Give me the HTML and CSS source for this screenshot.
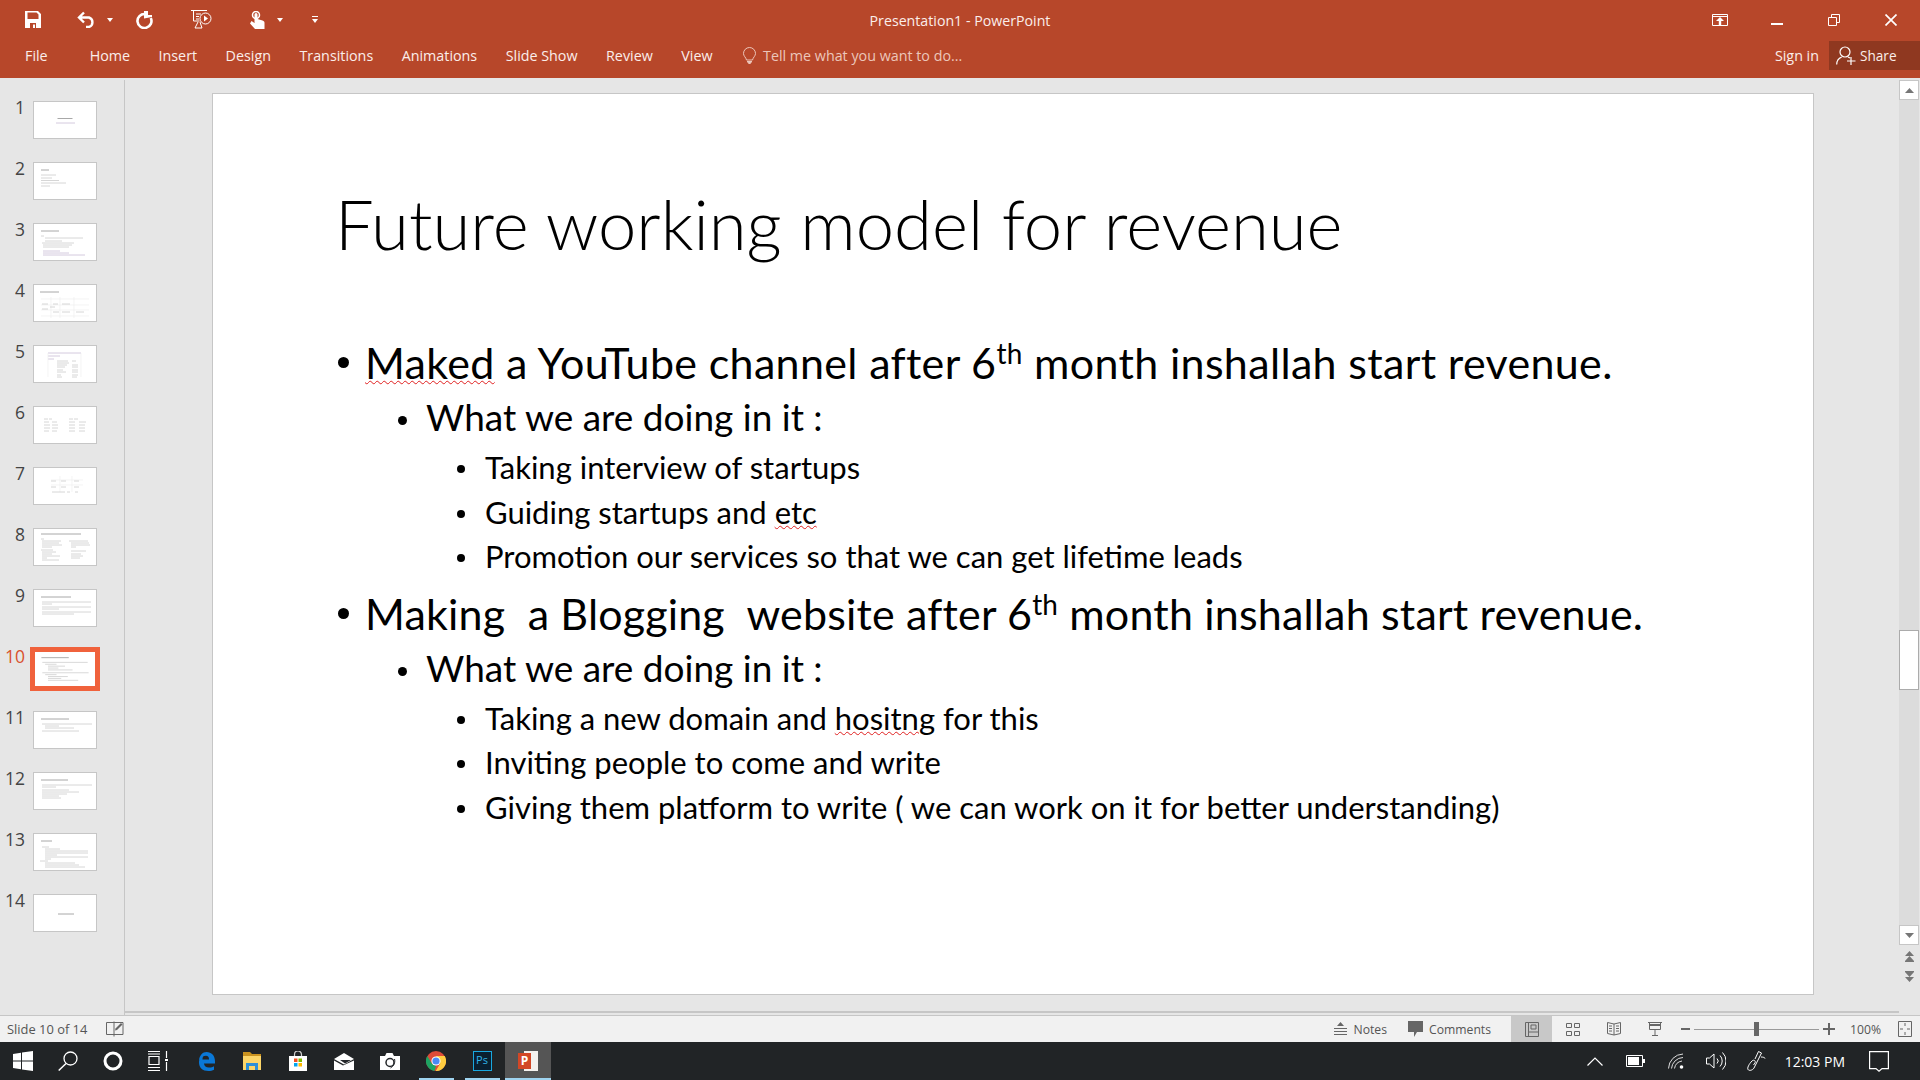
FILE: index.html
```html
<!DOCTYPE html>
<html lang="en">

<head>
    <meta charset="UTF-8" />
    <meta name="viewport" content="width=device-width, initial-scale=1.0" />
    <title>Presentation1 - PowerPoint</title>
    <link rel="stylesheet" href="styles.css">
</head>

<body>
    <header class="ribbon">
        <div class="titlebar">
            <div class="qat">
                <svg class="qat-save" width="16" height="17" viewBox="0 0 16 17"><path fill="#fff" fill-rule="evenodd" d="M0 0h13l3 3v14H0zM2.500 1.500v6.500h11V3.500l-2-2zM5 12v5h6v-5zM8 13.500h2V17H8z"/></svg>
                <svg class="qat-undo" width="19" height="17" viewBox="0 0 19 17"><path fill="none" stroke="#fff" stroke-width="2.400" d="M7 1.500 2 6.500l5 5M2.500 6.500H12a5 5 0 0 1 0 9.500H9"/></svg>
                <span class="caret qat-caret-a"></span>
                <svg class="qat-redo" width="18" height="18" viewBox="0 0 18 18"><path fill="none" stroke="#fff" stroke-width="2.600" d="M10 3A7 7 0 1 0 15.800 7"/><path fill="#fff" d="M9 0v7.500l8-1.500V4h-4V0z"/></svg>
                <svg class="qat-show" width="21" height="19" viewBox="0 0 21 19"><path fill="none" stroke="#fff" d="M0 .5h16M2.500 1v10h6M5 4h5M5 6.500h3M5 9h3M7 12l-3 6h7l-2-6"/><circle cx="14.500" cy="8.500" r="5.500" fill="none" stroke="#fff"/><path fill="#fff" d="M13 5.500l4 3-4 3z"/></svg>
                <svg class="qat-touch" width="15" height="18" viewBox="0 0 15 18"><circle cx="6" cy="4" r="3.500" fill="none" stroke="#fff" stroke-width="1.500"/><path fill="#fff" d="M4.500 3.500a1.500 1.500 0 0 1 3 0V8l5 1.500c1.500.5 2 1 2 2.500v6H5l-5-5.500L1.500 10l3 2z"/></svg>
                <span class="caret qat-caret-b"></span>
                <svg class="qat-more" width="6" height="8" viewBox="0 0 6 8"><path fill="#fff" d="M0 0h6v1H0zM0 3h6L3 7z"/></svg>
            </div>
            <div class="doc-title">Presentation1 - PowerPoint</div>
            <div class="window-controls">
                <svg width="16" height="12" viewBox="0 0 16 12"><path fill="none" stroke="#fff" d="M.5.500h15v11H.5zM.5 2.500h15"/><path fill="#fff" d="M8 3l4 4H9.200v4H6.800V7H4z"/></svg>
                <svg class="ctl-min" width="12" height="2" viewBox="0 0 12 2"><path fill="#fff" d="M0 0h12v2H0z"/></svg>
                <svg class="ctl-restore" width="12" height="12" viewBox="0 0 12 12"><path fill="none" stroke="#fff" d="M.5 3.500h8v8h-8zM3.500 3V.5h8v8H9"/></svg>
                <svg class="ctl-close" width="12" height="12" viewBox="0 0 12 12"><path fill="none" stroke="#fff" stroke-width="1.700" d="M.5.500l11 11M11.500.5l-11 11"/></svg>
            </div>
        </div>
        <div class="tabs">
            <span class="tab tab-file">File</span>
            <span class="tab">Home</span>
            <span class="tab">Insert</span>
            <span class="tab">Design</span>
            <span class="tab">Transitions</span>
            <span class="tab">Animations</span>
            <span class="tab">Slide Show</span>
            <span class="tab">Review</span>
            <span class="tab">View</span>
            <span class="tell-me">
                <svg width="13" height="17" viewBox="0 0 13 17"><path fill="none" stroke="#ecc6ba" d="M6.500.5a6 6 0 0 0-6 6c0 2.500 2.500 4 3 6.500h6c.5-2.500 3-4 3-6.500a6 6 0 0 0-6-6z"/><path fill="#ecc6ba" d="M4 14h5v1.500H8L7.500 17h-2L5 15.500H4z"/></svg>
                Tell me what you want to do...
            </span>
            <span class="sign-in">Sign in</span>
            <span class="share">
                <svg width="20" height="19" viewBox="0 0 20 19"><circle cx="9" cy="6" r="5" fill="none" stroke="#fff" stroke-width="1.200"/><path fill="none" stroke="#fff" stroke-width="1.200" d="M.7 18.500c0-4 2.500-6.500 5-7.500M12 11l2 1M15 11v8M11 15h8.500"/></svg>
                Share
            </span>
        </div>
    </header>

    <main class="workspace">
        <aside class="slide-panel">
            <div class="thumb-row"><span class="thumb-num">1</span><div class="thumb"><svg viewBox="0 0 62 36"><path class="head" d="M23.500 16.500h15"/><path class="tint" d="M22 21h19"/></svg></div></div>
            <div class="thumb-row"><span class="thumb-num">2</span><div class="thumb"><svg viewBox="0 0 62 36"><path class="head" d="M7 7h8"/><path d="M7 12h15M7 15h11M7 17.500h18M7 20h25M7 23h9"/></svg></div></div>
            <div class="thumb-row"><span class="thumb-num">3</span><div class="thumb"><svg viewBox="0 0 62 36"><path class="head" d="M7 7h18"/><path d="M7 12h3M11 14h38M11 17h17M8 19h32M9 21h29M9 23h26"/><path class="tint" d="M9 27h17M9 29h26M9 31h42"/></svg></div></div>
            <div class="thumb-row"><span class="thumb-num">4</span><div class="thumb"><svg viewBox="0 0 62 36"><path class="head" d="M6 7h19"/><path class="faint" d="M7 14h48M7 20h48M7 25h48M7 31h48M17 12v21M26 12v21M40 12v21"/><path d="M8 19h6M19 19h5M28 19h8M8 24h6M19 27h6M28 27h8M42 27h8M16 22h5"/></svg></div></div>
            <div class="thumb-row"><span class="thumb-num">5</span><div class="thumb"><svg viewBox="0 0 62 36"><path class="tint" d="M14 7h33M14 10h12M14 13h6"/><path class="faint" d="M14 7v24M47 7v24"/><path d="M23 15h11M38 15h4M23 17h12M23 19h10M38 19h6M23 21h8M38 21h6M23 24h6M38 24h6M23 26h9M38 26h6M23 29h4M38 29h6M23 31h5M38 31h5"/></svg></div></div>
            <div class="thumb-row"><span class="thumb-num">6</span><div class="thumb"><svg viewBox="0 0 62 36"><path d="M10 12h4M15 12h3M35 12h4M40 12h4M10 15h5M18 15h5M35 15h6M45 15h7M10 18h6M18 18h6M35 18h6M45 18h6M10 21h6M18 21h6M35 21h6M45 21h6M10 24h5M18 24h5M35 24h6M45 24h6"/></svg></div></div>
            <div class="thumb-row"><span class="thumb-num">7</span><div class="thumb"><svg viewBox="0 0 62 36"><path class="faint" d="M17 12h32M17 17h32M26 8v16M38 8v16"/><path d="M17 13h5M27 13h5M40 13h5M17 19h5M27 19h5M40 19h5M18 24h13M33 24h3M41 24h3"/></svg></div></div>
            <div class="thumb-row"><span class="thumb-num">8</span><div class="thumb"><svg viewBox="0 0 62 36"><path class="head" d="M7 5h40"/><path d="M7 10h3M8 12h19M8 14h17M8 16h20M8 18h10M7 21h12M8 23h14M8 25h10M8 27h18M8 29h5M8 31h17M35 12h19M37 14h18M37 16h19M37 18h5M37 22h15M37 25h10M37 27h12M37 29h9"/></svg></div></div>
            <div class="thumb-row"><span class="thumb-num">9</span><div class="thumb"><svg viewBox="0 0 62 36"><path class="head" d="M7 7h30"/><path d="M8 12h49M8 14h10M8 17h49M8 19h17M8 22h49M8 24h32"/></svg></div></div>
            <div class="thumb-row"><span class="thumb-num thumb-num-active">10</span><div class="thumb thumb-active"><svg viewBox="0 0 62 36"><path class="head" d="M6 6h29"/><path d="M7 11h48M10 13h12M13 15h18M13 17h11M13 19h26M7 22h49M10 24h12M13 26h21M13 28h14M13 30h32"/></svg></div></div>
            <div class="thumb-row"><span class="thumb-num">11</span><div class="thumb"><svg viewBox="0 0 62 36"><path class="head" d="M7 7h28"/><path d="M8 12h50M11 14h14M11 16h29M8 19h37"/></svg></div></div>
            <div class="thumb-row"><span class="thumb-num">12</span><div class="thumb"><svg viewBox="0 0 62 36"><path class="head" d="M7 7h27"/><path d="M8 12h50M8 14h14M8 17h27M8 19h37M8 21h25M8 23h17M8 25h19"/></svg></div></div>
            <div class="thumb-row"><span class="thumb-num">13</span><div class="thumb"><svg viewBox="0 0 62 36"><path class="head" d="M7 7h11"/><path d="M8 13h7M11 15h15M11 17h43M11 19h43M11 21h12M11 23h43M11 25h6M6 27h8M11 29h30M11 31h34M11 33h40"/></svg></div></div>
            <div class="thumb-row"><span class="thumb-num">14</span><div class="thumb"><svg viewBox="0 0 62 36"><path class="head" d="M24 19h16"/></svg></div></div>
        </aside>

        <section class="editor">
            <article class="slide">
                <h1 class="slide-title">Future working model for revenue</h1>
                <ul class="level-1">
                    <li><span class="typo">Maked</span> a YouTube channel after 6<sup>th</sup> month inshallah start revenue.</li>
                </ul>
                <ul class="level-2">
                    <li>What we are doing in it :</li>
                </ul>
                <ul class="level-3">
                    <li>Taking interview of startups</li>
                    <li>Guiding startups and <span class="typo">etc</span></li>
                    <li>Promotion our services so that we can get lifetime leads</li>
                </ul>
                <ul class="level-1 block-gap">
                    <li>Making&nbsp; a Blogging&nbsp; website after 6<sup>th</sup> month inshallah start revenue.</li>
                </ul>
                <ul class="level-2">
                    <li>What we are doing in it :</li>
                </ul>
                <ul class="level-3">
                    <li>Taking a new domain and <span class="typo">hositng</span> for this</li>
                    <li>Inviting people to come and write</li>
                    <li>Giving them platform to write ( we can work on it for better understanding)</li>
                </ul>
            </article>
        </section>

        <aside class="scrollbar">
            <div class="scroll-btn"><svg width="9" height="5" viewBox="0 0 9 5"><path fill="#767676" d="M4.500 0 9 5H0z"/></svg></div>
            <div class="scroll-track"><div class="scroll-thumb"></div></div>
            <div class="scroll-btn"><svg width="9" height="5" viewBox="0 0 9 5"><path fill="#767676" d="M0 0h9L4.500 5z"/></svg></div>
            <svg class="scroll-page" width="9" height="11" viewBox="0 0 9 11"><path fill="#767676" d="M4.500 0 9 5H0zM4.500 5 9 10v1H0v-1z"/></svg>
            <svg class="scroll-page" width="9" height="11" viewBox="0 0 9 11"><path fill="#767676" d="M0 0h9v1L4.500 6 0 1zM0 6h9L4.500 11z"/></svg>
        </aside>
    </main>

    <footer class="statusbar">
        <span class="slide-count">Slide 10 of 14</span>
        <svg class="notes-edit" width="18" height="16" viewBox="0 0 18 16"><path fill="none" stroke="#666" d="M8 1.500H.5v12H8M8 .5v15M8 1.500h9v12H8"/><path fill="#666" d="M15 2l1.500 1.500L11 9l-2 .5.500-2z"/></svg>
        <div class="status-right">
            <span class="status-item">
                <svg width="13" height="15" viewBox="0 0 13 15"><path fill="#666" d="M6.500 0 10 4H3zM0 6h13v1H0zM0 9h13v1H0zM0 12h13v1H0z"/></svg>
                Notes
            </span>
            <span class="status-item status-comments">
                <svg width="15" height="16" viewBox="0 0 15 16"><path fill="#666" d="M0 0h15v11H9l-3 5v-5H0z"/></svg>
                Comments
            </span>
            <span class="view-btn view-btn-on"><svg width="14" height="15" viewBox="0 0 14 15"><path fill="none" stroke="#666" d="M.5.500h13v14H.5zM3.500.5v14M6 3h5v4H6zM4 10h9"/></svg></span>
            <span class="view-btn"><svg width="14" height="13" viewBox="0 0 14 13"><path fill="none" stroke="#666" d="M.5.500h5v4h-5zM8.500.5h5v4h-5zM.5 8.500h5v4h-5zM8.500 8.500h5v4h-5z"/></svg></span>
            <span class="view-btn"><svg width="14" height="14" viewBox="0 0 14 14"><path fill="none" stroke="#666" d="M.5.500 7 2l6.500-1.500v11L7 13 .5 11.500zM7 2v11M2 4h3M2 6.500h3M2 9h3M9 4h3M9 6.500h3M9 9h3"/></svg></span>
            <span class="view-btn"><svg width="14" height="14" viewBox="0 0 14 14"><path fill="none" stroke="#666" d="M0 .5h14M1.500 1v6.500h11V1M7 8v5M4 13.500h6"/><path fill="#666" d="M2 2h10v2H2z"/></svg></span>
            <span class="zoom-minus"></span>
            <div class="zoom-slider"></div>
            <span class="zoom-plus"></span>
            <span class="zoom-level">100%</span>
            <svg class="zoom-fit" width="14" height="16" viewBox="0 0 14 16"><path fill="none" stroke="#666" d="M.5.500h13v15H.5zM7 2v3M7 11v3M2 8h3M9 8h3"/></svg>
        </div>
    </footer>

    <nav class="taskbar">
        <span class="task-btn task-sys"><svg width="20" height="20" viewBox="0 0 20 20"><path fill="#fff" d="M0 3l8-1.200v7.700H0zM9 1.600 20 0v9.500H9zM0 10.500h8v7.700L0 17zM9 10.500h11V20L9 18.400z"/></svg></span>
        <span class="task-btn task-sys"><svg width="20" height="20" viewBox="0 0 20 20"><circle cx="12.500" cy="7.500" r="6.500" fill="none" stroke="#fff" stroke-width="1.300"/><path stroke="#fff" stroke-width="1.500" d="M8 12.500.7 19.500"/></svg></span>
        <span class="task-btn task-sys"><svg width="20" height="20" viewBox="0 0 20 20"><circle cx="10" cy="10" r="8" fill="none" stroke="#fff" stroke-width="3"/></svg></span>
        <span class="task-btn task-sys"><svg width="20" height="20" viewBox="0 0 20 20"><path fill="none" stroke="#fff" stroke-width="1.200" d="M0 .5h12M0 19.500h12M1 5.500h10v8H1zM0 16.500h12M0 3h12M18.500 0v7M18.500 11v9"/><path fill="#fff" d="M17 8h3v2h-3z"/></svg></span>
        <span class="task-btn task-first"><svg width="17" height="19" viewBox="0 0 17 19"><path fill="#0a78d7" d="M8.500 0C13.500 0 17 3.500 17 9.500v2H6c.2 2.500 2 4 5 4 2 0 4-.6 5-1.300v3.500c-1.500.9-3.500 1.300-5.500 1.300C4.500 19 1 15.500 1 10.500 1 6.500 3.500 3 7 2.500 5 4 4.500 5.500 4.500 7.500H11c0-2.500-1-3.700-3-3.700-2.500 0-5 1.700-7 4.200C1.700 3.500 4.500 0 8.500 0z"/></svg></span>
        <span class="task-btn"><svg width="18" height="18" viewBox="0 0 18 18"><path fill="#c9921f" d="M0 0h7l2 2h9v3H0z"/><path fill="#fbd568" d="M0 4h18v14H0z"/><path fill="#2c8fd6" d="M3 11h12v7h-3v-4H6v4H3z"/></svg></span>
        <span class="task-btn"><svg width="18" height="20" viewBox="0 0 18 20"><path fill="none" stroke="#cfcfcf" stroke-width="1.200" d="M5.500 5V3.500a3.500 3.500 0 0 1 7 0V5"/><path fill="#fff" d="M0 5h18v15H0z"/><path fill="#f25022" d="M5 7.500h3.500V11H5z"/><path fill="#7fba00" d="M9.500 7.500H13V11H9.500z"/><path fill="#00a4ef" d="M5 12h3.500v3.500H5z"/><path fill="#ffb900" d="M9.500 12H13v3.500H9.500z"/></svg></span>
        <span class="task-btn"><svg width="20" height="17" viewBox="0 0 20 17"><path fill="#fff" d="M0 6 10 0l10 6-10 5.500zM0 7.500 9 12.500l11-5V17H0z"/><path fill="#232629" d="M6 7h11l-6 3.500z"/></svg></span>
        <span class="task-btn"><svg width="20" height="17" viewBox="0 0 20 17"><path fill="#fff" d="M0 3h5l1.500-3h6L14 3h6v14H0z"/><circle cx="10" cy="9.500" r="4" fill="none" stroke="#232629" stroke-width="1.500"/><path fill="none" stroke="#232629" d="M14.500 6c1 3-.5 7-4 9"/></svg></span>
        <span class="task-btn task-open"><svg width="20" height="20" viewBox="0 0 20 20"><circle cx="10" cy="10" r="10" fill="#dd4b39"/><path fill="#1da462" d="M10 20A10 10 0 0 1 1.300 5l4.500 7.500L10 15l-1.500 4.900z"/><path fill="#ffcd40" d="M10 5h8.700a10 10 0 0 1-9 15l4.500-7.500z"/><circle cx="10" cy="10" r="4.600" fill="#fff"/><circle cx="10" cy="10" r="3.600" fill="#4a8af4"/></svg></span>
        <span class="task-btn task-open"><span class="ps-icon">Ps</span></span>
        <span class="task-btn task-open task-current"><span class="ppt-icon"><span class="ppt-sheet"></span><span class="ppt-letter">P</span></span></span>
        <div class="tray">
            <svg class="tray-chevron" width="16" height="9" viewBox="0 0 16 9"><path fill="none" stroke="#fff" stroke-width="1.200" d="M.5 8.500 8 1l7.500 7.500"/></svg>
            <svg class="tray-battery" width="19" height="12" viewBox="0 0 19 12"><path fill="none" stroke="#fff" d="M.5.500h16v11H.5z"/><path fill="#fff" d="M2 2h11v8H2zM17 4h2v4h-2z"/></svg>
            <svg class="tray-wifi" width="16" height="16" viewBox="0 0 16 16"><path fill="none" stroke="#ddd" d="M.5 15.500A15 15 0 0 1 15 1M3.500 15.500A12 12 0 0 1 15 4.500M6.500 15.500A9 9 0 0 1 14 8"/><circle cx="13.500" cy="14" r="1.800" fill="#fff"/></svg>
            <svg class="tray-volume" width="20" height="20" viewBox="0 0 20 20"><path fill="none" stroke="#fff" d="M.5 7h3L8 3v14l-4.500-4H.5zM11 7.500a3.500 3.500 0 0 1 0 5M14 4.500a8 8 0 0 1 0 11M16.500 1.500a12 12 0 0 1 0 17"/></svg>
            <svg class="tray-pen" width="20" height="20" viewBox="0 0 20 20"><path fill="none" stroke="#fff" d="M9 8 12.500.5l3 1.500L8 17c-1.500 2.500-5 3-6 1.500S3 13 6 10c2-2 4 0 3 2l-1.500 2M15 6c2 0 4 .5 4 1.500"/></svg>
            <span class="clock">12:03 PM</span>
            <svg class="tray-notify" width="20" height="21" viewBox="0 0 20 21"><path fill="none" stroke="#fff" stroke-width="1.200" d="M.6.600h18.800v17H13L10 20.200 7 17.600H.6z"/></svg>
        </div>
    </nav>
</body>

</html>
```
FILE: styles.css
```css
* {
    box-sizing: border-box;
}

html,
body {
    margin: 0;
    height: 1080px;
    overflow: hidden;
}

body {
    display: flex;
    flex-direction: column;
    font-family: "Open Sans", "Noto Sans", sans-serif;
    background-color: #e6e6e6;
}

svg {
    display: block;
    flex: none;
}

/* ribbon */
.ribbon {
    height: 78px;
    background-color: #b7472a;
    color: #fff;
}

.titlebar {
    display: grid;
    grid-template-columns: 1fr auto 1fr;
    align-items: center;
    height: 41px;
}

.qat {
    display: flex;
    align-items: center;
    padding: 0 0 2px 25px;
}

.qat-undo {
    margin-left: 36px;
}

.caret {
    width: 0;
    height: 0;
    border-left: 3.500px solid transparent;
    border-right: 3.500px solid transparent;
    border-top: 4px solid #fff;
}

.qat-caret-a {
    margin-left: 11px;
}

.qat-redo {
    margin-left: 22px;
}

.qat-show {
    margin-left: 38px;
}

.qat-touch {
    margin-left: 38px;
}

.qat-caret-b {
    margin-left: 12px;
}

.qat-more {
    margin-left: 29px;
}

.doc-title {
    font-size: 14.200px;
    color: #fbeeea;
}

.window-controls {
    display: flex;
    align-items: center;
    justify-content: flex-end;
    padding: 0 23px 2px 0;
}

.ctl-min {
    margin-left: 43px;
    margin-top: 8px;
}

.ctl-restore {
    margin-left: 45px;
}

.ctl-close {
    margin-left: 45px;
}

.tabs {
    display: flex;
    align-items: center;
    height: 29px;
    padding-left: 25px;
    font-size: 14.300px;
    color: #fbeeea;
}

.tab {
    margin-right: 28.500px;
}

.tab-file {
    margin-right: 42px;
}

.tell-me {
    display: flex;
    align-items: center;
    gap: 7px;
    margin-left: 2px;
    color: #ecc6ba;
}

.sign-in {
    margin-left: auto;
    margin-right: 10px;
}

.share {
    display: flex;
    align-items: center;
    gap: 4px;
    width: 91px;
    height: 29px;
    padding-left: 7px;
    background-color: #8f3820;
    font-size: 13.600px;
}

/* slide list on the left */
.workspace {
    display: flex;
    height: 938px;
    border-bottom: 1px solid #c6c6c6;
}

.slide-panel {
    flex: none;
    width: 125px;
    height: 935px;
    margin-top: 2px;
    padding-top: 20px;
    border-right: 1px solid #c6c6c6;
}

.thumb-row {
    display: flex;
    height: 61px;
}

.thumb-num {
    width: 27px;
    padding-right: 2px;
    font-family: "Open Sans", sans-serif;
    font-size: 17.500px;
    line-height: 14px;
    text-align: right;
    color: #444;
}

.thumb-num-active {
    color: #d9512c;
}

.thumb {
    width: 64px;
    height: 38px;
    margin-top: 1px;
    margin-left: 6px;
    border: 1px solid #c6c6c6;
    background-color: #fff;
}

.thumb svg {
    width: 62px;
    height: 36px;
    fill: none;
    stroke: #cccccc;
    stroke-width: 0.800;
}

.thumb .head {
    stroke: #a8a8a8;
    stroke-width: 1;
}

.thumb .tint {
    stroke: #c9bcd6;
}

.thumb .faint {
    stroke: #ececec;
    stroke-width: 0.600;
}

.thumb-active {
    border: 2px solid #f0623c;
    box-shadow: 0 0 0 3px #f0623c;
}

.thumb-active svg {
    width: 60px;
    height: 34px;
}

/* main slide */
.editor {
    flex: 1;
    height: 935px;
    padding: 15px 85px 0 87px;
    border-bottom: 2px solid #c6c6c6;
}

.slide {
    height: 902px;
    padding: 88px 0 0 122px;
    border: 1px solid #c6c6c6;
    background-color: #fff;
    color: #000;
    font-family: Lato, "Open Sans", sans-serif;
}

.slide-title {
    margin: 0 0 70px;
    font-size: 68.800px;
    font-weight: 300;
    line-height: 84px;
}

.slide ul {
    margin: 0;
    padding: 0;
    list-style: none;
}

.slide li {
    position: relative;
}

.slide li::before {
    content: "";
    position: absolute;
    border-radius: 50%;
    background-color: #000;
}

.level-1 {
    font-size: 43px;
    letter-spacing: 0.340px;
    line-height: 53px;
}

.level-1 li {
    padding-left: 30px;
}

.level-1 li::before {
    left: 3px;
    top: 21px;
    width: 11px;
    height: 11px;
}

.level-2 {
    font-size: 37px;
    line-height: 56px;
}

.level-2 li {
    padding-left: 91px;
}

.level-2 li::before {
    left: 63px;
    top: 27px;
    width: 9px;
    height: 9px;
}

.level-3 {
    font-size: 31px;
    line-height: 44.500px;
}

.level-3 li {
    padding-left: 150px;
}

.level-3 li::before {
    left: 122px;
    top: 20px;
    width: 8px;
    height: 8px;
}

.block-gap {
    margin-top: 8px !important;
    letter-spacing: 0.180px;
}

.slide sup {
    font-size: 65%;
    line-height: 0;
    vertical-align: 0.550em;
}

.typo {
    text-decoration: underline wavy #e02020 1px;
    text-underline-offset: 1px;
}

/* scrollbar */
.scrollbar {
    flex: none;
    display: flex;
    flex-direction: column;
    align-items: center;
    width: 20px;
    margin-top: 2px;
    margin-right: 1px;
    height: 935px;
}

.scroll-btn {
    display: flex;
    align-items: center;
    justify-content: center;
    width: 20px;
    height: 20px;
    border: 1px solid #c6c6c6;
    background-color: #fff;
}

.scroll-track {
    flex: none;
    width: 20px;
    height: 825px;
    padding-top: 530px;
    background-color: #dcdcdc;
}

.scroll-thumb {
    height: 60px;
    border: 1px solid #ababab;
    background-color: #fff;
}

.scroll-page {
    margin-top: 6px;
    margin-bottom: 3px;
}

/* status bar */
.statusbar {
    display: flex;
    align-items: center;
    height: 26px;
    padding-left: 7px;
    background-color: #f1f1f1;
    font-size: 12.200px;
    color: #555;
}

.slide-count {
    font-size: 12.900px;
}

.notes-edit {
    margin-left: 19px;
}

.status-right {
    display: flex;
    align-items: center;
    height: 100%;
    margin-left: auto;
}

.status-item {
    display: flex;
    align-items: center;
    gap: 6px;
}

.status-comments {
    margin-left: 21px;
    margin-right: 20px;
}

.view-btn {
    display: flex;
    align-items: center;
    justify-content: center;
    width: 41px;
    height: 100%;
}

.view-btn-on {
    background-color: #c8c8c8;
}

.zoom-minus {
    width: 9px;
    height: 2px;
    margin-left: 6px;
    background-color: #666;
}

.zoom-slider {
    position: relative;
    width: 125px;
    height: 1px;
    margin-left: 4px;
    background-color: #9a9a9a;
}

.zoom-slider::after {
    content: "";
    position: absolute;
    left: 60px;
    top: -7px;
    width: 5px;
    height: 14px;
    background-color: #666;
}

.zoom-plus {
    position: relative;
    width: 12px;
    height: 2px;
    margin-left: 4px;
    background-color: #666;
}

.zoom-plus::after {
    content: "";
    position: absolute;
    left: 5px;
    top: -5px;
    width: 2px;
    height: 12px;
    background-color: #666;
}

.zoom-level {
    margin-left: 15px;
}

.zoom-fit {
    margin-left: 17px;
    margin-right: 8px;
}

/* windows taskbar */
.taskbar {
    display: flex;
    align-items: center;
    height: 38px;
    background-color: #212426;
}

.task-btn {
    position: relative;
    display: flex;
    align-items: center;
    justify-content: center;
    width: 46px;
    height: 100%;
}

.task-sys {
    width: 45px;
}

.task-first {
    margin-left: 3px;
}

.task-open::after {
    content: "";
    position: absolute;
    left: 6px;
    right: 5px;
    bottom: 0;
    height: 2px;
    background-color: #9fd4f0;
}

.task-current {
    background-color: #555;
}

.task-current::after {
    left: 0;
    right: 0;
}

.ps-icon {
    width: 19px;
    height: 20px;
    border: 1.500px solid #19a8e0;
    background-color: #0a2030;
    color: #2fb4ea;
    font-family: "Open Sans", sans-serif;
    font-size: 11px;
    line-height: 16px;
    text-align: center;
}

.ppt-icon {
    position: relative;
    width: 20px;
    height: 20px;
}

.ppt-sheet {
    position: absolute;
    left: 6px;
    top: 0;
    width: 14px;
    height: 20px;
    background-color: #f4f1ee;
}

.ppt-letter {
    position: absolute;
    left: 0;
    top: 2px;
    width: 13px;
    height: 16px;
    background-color: #d24726;
    color: #fff;
    font-family: "Open Sans", sans-serif;
    font-size: 12px;
    font-weight: 700;
    line-height: 16px;
    text-align: center;
}

.tray {
    display: flex;
    align-items: center;
    margin-left: auto;
    padding-right: 31px;
    color: #fff;
}

.tray-battery {
    margin-left: 23px;
}

.tray-wifi {
    margin-left: 23px;
}

.tray-volume {
    margin-left: 22px;
}

.tray-pen {
    margin-left: 20px;
}

.clock {
    margin-left: 19px;
    font-size: 14px;
}

.tray-notify {
    margin-left: 24px;
}
```
